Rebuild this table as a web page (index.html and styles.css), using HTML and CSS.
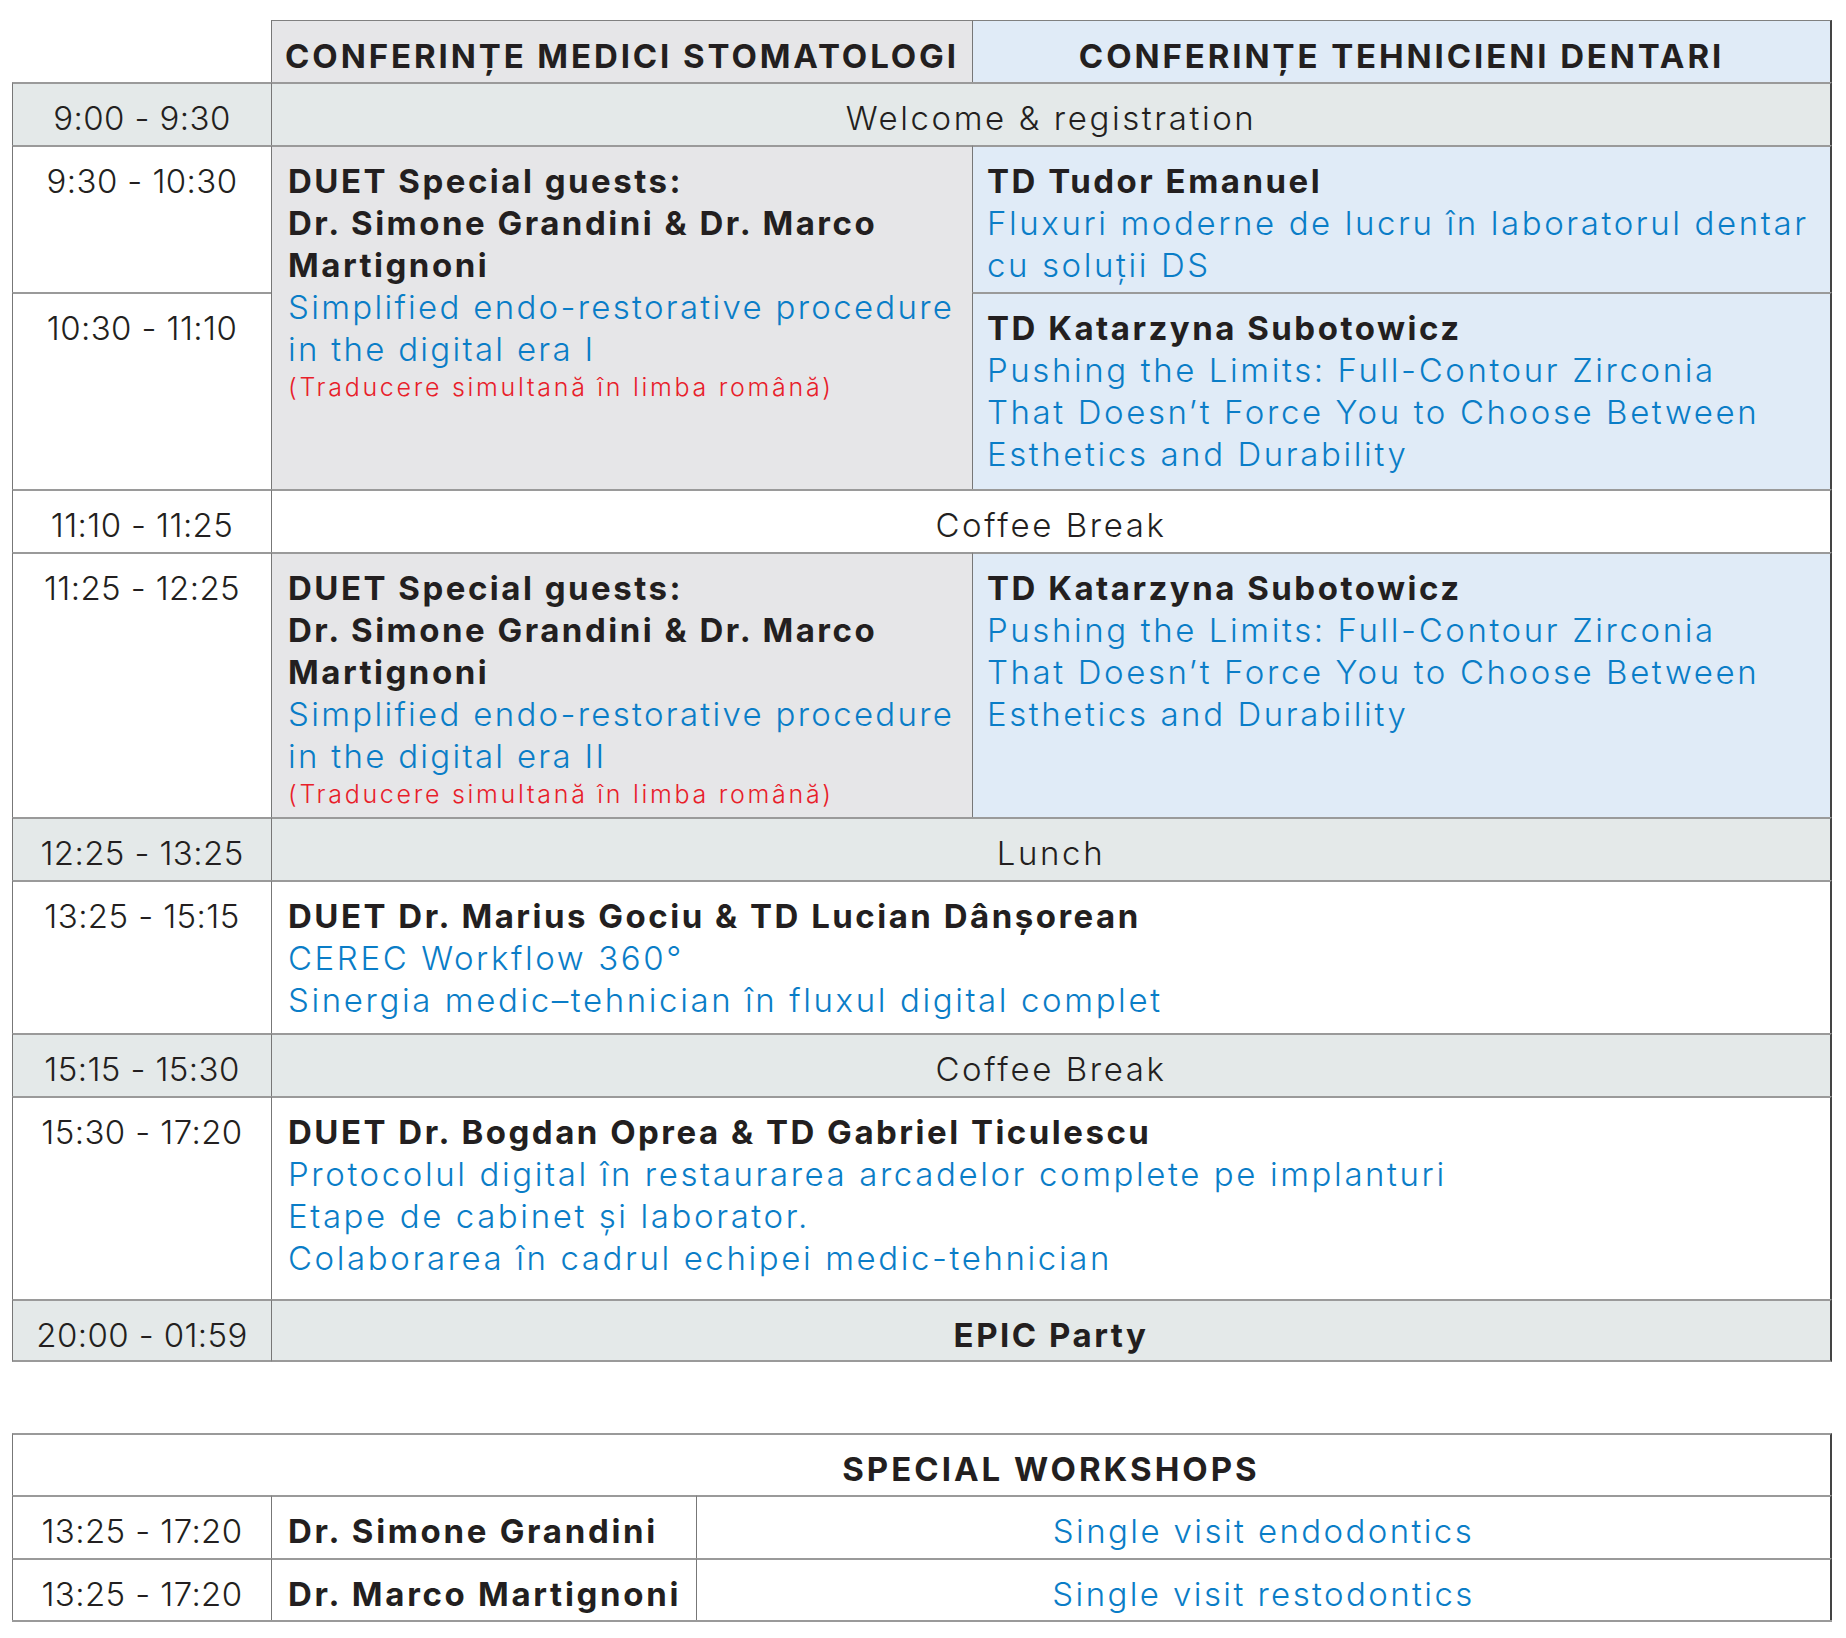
FILE: index.html
```html
<!DOCTYPE html>
<html lang="ro">
<head>
<meta charset="utf-8">
<title>Program conferințe</title>
<link rel="stylesheet" href="styles.css">
</head>
<body>
<main class="page">
  <section class="schedule">
    <div class="corner"></div>
    <div class="hd hd-med">CONFERINȚE MEDICI STOMATOLOGI</div>
    <div class="hd hd-tech">CONFERINȚE TEHNICIENI DENTARI</div>

    <div class="time band">9:00 - 9:30</div>
    <div class="full band">Welcome &amp; registration</div>

    <div class="time">9:30 - 10:30</div>
    <div class="med span2">
      <p class="who">DUET Special guests:<br>Dr. Simone Grandini &amp; Dr. Marco<br>Martignoni</p>
      <p class="topic">Simplified endo-restorative procedure<br>in the digital era I</p>
      <p class="note">(Traducere simultană în limba română)</p>
    </div>
    <div class="tech">
      <p class="who">TD Tudor Emanuel</p>
      <p class="topic">Fluxuri moderne de lucru în laboratorul dentar<br>cu soluții DS</p>
    </div>

    <div class="time">10:30 - 11:10</div>
    <div class="tech">
      <p class="who">TD Katarzyna Subotowicz</p>
      <p class="topic">Pushing the Limits: Full-Contour Zirconia<br>That Doesn’t Force You to Choose Between<br>Esthetics and Durability</p>
    </div>

    <div class="time">11:10 - 11:25</div>
    <div class="full">Coffee Break</div>

    <div class="time">11:25 - 12:25</div>
    <div class="med">
      <p class="who">DUET Special guests:<br>Dr. Simone Grandini &amp; Dr. Marco<br>Martignoni</p>
      <p class="topic">Simplified endo-restorative procedure<br>in the digital era II</p>
      <p class="note">(Traducere simultană în limba română)</p>
    </div>
    <div class="tech">
      <p class="who">TD Katarzyna Subotowicz</p>
      <p class="topic">Pushing the Limits: Full-Contour Zirconia<br>That Doesn’t Force You to Choose Between<br>Esthetics and Durability</p>
    </div>

    <div class="time band">12:25 - 13:25</div>
    <div class="full band">Lunch</div>

    <div class="time">13:25 - 15:15</div>
    <div class="wide">
      <p class="who">DUET Dr. Marius Gociu &amp; TD Lucian Dânșorean</p>
      <p class="topic">CEREC Workflow 360°<br>Sinergia medic–tehnician în fluxul digital complet</p>
    </div>

    <div class="time band">15:15 - 15:30</div>
    <div class="full band">Coffee Break</div>

    <div class="time">15:30 - 17:20</div>
    <div class="wide">
      <p class="who">DUET Dr. Bogdan Oprea &amp; TD Gabriel Ticulescu</p>
      <p class="topic">Protocolul digital în restaurarea arcadelor complete pe implanturi<br>Etape de cabinet și laborator.<br>Colaborarea în cadrul echipei medic-tehnician</p>
    </div>

    <div class="time band last">20:00 - 01:59</div>
    <div class="full band last party">EPIC Party</div>
  </section>

  <section class="workshops">
    <div class="ws-head">SPECIAL WORKSHOPS</div>
    <div class="ws-time">13:25 - 17:20</div>
    <div class="ws-name">Dr. Simone Grandini</div>
    <div class="ws-topic">Single visit endodontics</div>
    <div class="ws-time">13:25 - 17:20</div>
    <div class="ws-name">Dr. Marco Martignoni</div>
    <div class="ws-topic">Single visit restodontics</div>
  </section>
</main>
</body>
</html>
```

FILE: styles.css
```css
* { box-sizing: border-box; }

html, body {
  margin: 0;
  padding: 0;
  background: #ffffff;
}

body {
  font-family: "Inter", "Noto Sans", sans-serif;
  color: #231f20;
  font-size: 33px;
  line-height: 42px;
  font-weight: 300;
  letter-spacing: 2.6px;
}

p { margin: 0; }

.page {
  padding: 20px 14px 0 12px;
}

/* ---------- main schedule ---------- */
.schedule {
  display: grid;
  width: 1820px;
  grid-template-columns: 259px 701px 860px;
  grid-template-rows: 62px 63px 147px 197px 63px 265px 63px 153px 63px 203px 63px;
}

.schedule > div {
  border-top: 2px solid #9a9a9a;
  border-left: 1px solid #777;
  padding-top: 13px;
}

.schedule > .corner {
  border: none;
}

.hd {
  font-weight: 700;
  letter-spacing: 2.9px;
  text-align: center;
  border-top-color: #808080 !important;
  border-top-width: 1px !important;
}
.schedule > .hd { padding-top: 14px; }
.hd-med { background: #e6e6e8; }
.hd-tech { background: #e0ebf7; border-right: 2px solid #444; }

.time {
  grid-column: 1;
  text-align: center;
  letter-spacing: 0.4px;
}

.band { background: #e4e9e9; }

.full {
  grid-column: 2 / 4;
  text-align: center;
  border-right: 2px solid #444;
}

.wide {
  grid-column: 2 / 4;
  border-right: 2px solid #444;
  padding-left: 16px;
}

.med {
  grid-column: 2;
  background: #e6e6e8;
  padding-left: 16px;
}
.span2 { grid-row: span 2; }

.tech {
  grid-column: 3;
  background: #e0ebf7;
  padding-left: 14px;
  border-right: 2px solid #444;
}

.schedule > .last {
  border-bottom: 2px solid #9a9a9a;
}

.who { font-weight: 700; letter-spacing: 2.5px; }
.topic { color: #0a7dc7; }
.med .topic { letter-spacing: 2.3px; }
.note {
  color: #e8202a;
  font-size: 25px;
  line-height: 30px;
  letter-spacing: 2.7px;
  margin-top: 2px;
}
.party { font-weight: 700; letter-spacing: 2.5px; }

/* ---------- workshops ---------- */
.workshops {
  margin-top: 71px;
  display: grid;
  width: 1820px;
  grid-template-columns: 259px 425px 1136px;
  grid-template-rows: 62px 63px 62px;
  border-bottom: 2px solid #9a9a9a;
}

.workshops > div {
  border-top: 2px solid #9a9a9a;
  border-left: 1px solid #777;
  padding-top: 13px;
}

.ws-head {
  grid-column: 1 / 4;
  font-weight: 700;
  letter-spacing: 3px;
  text-align: center;
  padding-left: 259px;
  border-right: 2px solid #444;
}

.ws-time { text-align: center; letter-spacing: 0.4px; }
.ws-name { font-weight: 700; letter-spacing: 2.7px; padding-left: 16px; }
.ws-topic {
  color: #0a7dc7;
  text-align: center;
  letter-spacing: 2.4px;
  border-right: 2px solid #444;
}
```
